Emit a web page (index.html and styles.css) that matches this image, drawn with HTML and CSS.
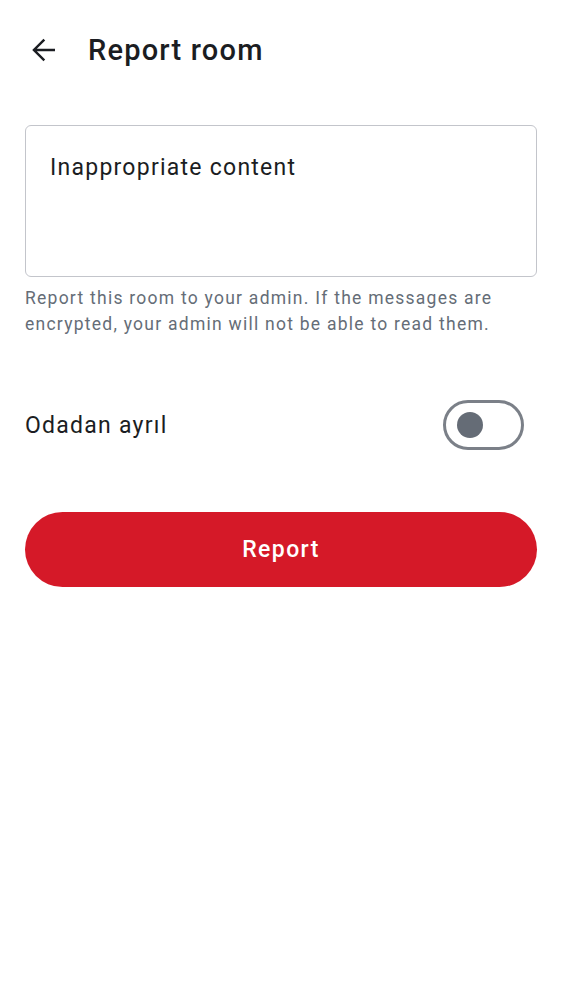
FILE: index.html
```html
<!DOCTYPE html>
<html>
<head>
<meta charset="utf-8">
<link rel="stylesheet" href="styles.css">
</head>
<body>
<div class="screen">
  <header class="topbar">
    <svg class="back" width="36" height="36" viewBox="0 0 24 24"><path d="M20 11.15H7.9l5.55-5.55L12.3 4.5 4.8 12l7.5 7.5 1.15-1.1-5.55-5.55H20v-1.7z" fill="#1b1d22"/></svg>
    <h1 class="title">Report room</h1>
  </header>
  <div class="field">
    <div class="textarea">Inappropriate content</div>
    <p class="helper">Report this room to your admin. If the messages are encrypted, your admin will not be able to read them.</p>
  </div>
  <div class="row">
    <span class="row-label">Odadan ayrıl</span>
    <div class="toggle"><div class="thumb"></div></div>
  </div>
  <button class="report">Report</button>
</div>
</body>
</html>
```
FILE: styles.css
```css
* { box-sizing: border-box; }
html, body { margin: 0; padding: 0; background: #fff; }
body { font-family: Roboto, "Noto Sans", sans-serif; color: #1b1d22; }
.screen { padding: 0 25px; }
.topbar { display: flex; align-items: center; height: 100px; gap: 27px; }
.back { flex: none; }
.title { margin: 0; font-size: 29px; font-weight: 500; color: #1b1d22; letter-spacing: 1.2px; }
.field { margin-top: 25px; }
.textarea { height: 152px; border: 1.5px solid #c3c5cb; border-radius: 6px; padding: 27px 24px; font-size: 23px; line-height: 30px; color: #1b1d22; letter-spacing: 1.25px; }
.helper { margin: 8px 0 0; font-size: 17.5px; line-height: 26px; color: #656d77; letter-spacing: 1.25px; }
.row { display: flex; align-items: center; justify-content: space-between; margin-top: 63px; height: 50px; padding-right: 13px; }
.row-label { font-size: 23px; color: #1b1d22; letter-spacing: 1.25px; }
.toggle { width: 81px; height: 50px; border: 3px solid #7b8088; border-radius: 25px; display: flex; align-items: center; padding-left: 11px; }
.thumb { width: 26px; height: 26px; border-radius: 50%; background: #656c76; }
.report { display: block; width: 100%; margin-top: 62px; height: 75px; border: none; border-radius: 38px; background: #d51928; color: #fff; font-family: Roboto, sans-serif; font-size: 23px; font-weight: 500; letter-spacing: 1.4px; }
```
